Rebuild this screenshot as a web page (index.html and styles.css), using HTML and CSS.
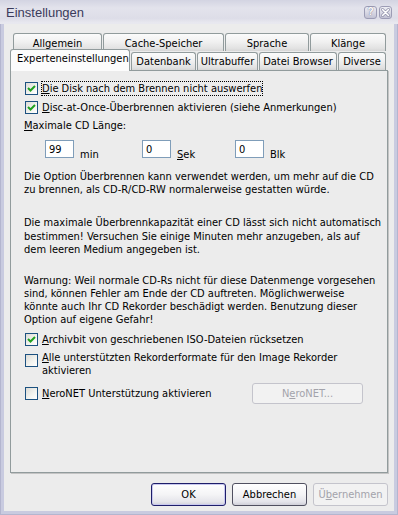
FILE: index.html
```html
<!DOCTYPE html>
<html lang="de">
<head>
<meta charset="utf-8">
<title>Einstellungen</title>
<link rel="stylesheet" href="styles.css">
</head>
<body>
<div class="window">
  <div class="titlebar">
    <span class="title">Einstellungen</span>
    <div class="tbuttons">
      <span class="tbtn"><span class="qmark">?</span></span>
      <span class="tbtn">
        <svg width="11" height="11" viewBox="0 0 11 11"><path d="M2.5 2.5 L8.5 8.5 M8.5 2.5 L2.5 8.5" stroke="#8c8ca6" stroke-width="3" stroke-linecap="round"/><path d="M2.5 2.5 L8.5 8.5 M8.5 2.5 L2.5 8.5" stroke="#ffffff" stroke-width="1.6" stroke-linecap="round"/></svg>
      </span>
    </div>
  </div>
  <div class="client">
    <div class="tabs">
      <div class="tabrow back">
        <div class="tab w-allg">Allgemein</div>
        <div class="tab w-cache">Cache-Speicher</div>
        <div class="tab w-spr">Sprache</div>
        <div class="tab w-kl">Klänge</div>
      </div>
      <div class="tabrow front">
        <div class="tab sel w-exp">Experteneinstellungen</div>
        <div class="tab w-db">Datenbank</div>
        <div class="tab w-ub">Ultrabuffer</div>
        <div class="tab w-dbr">Datei Browser</div>
        <div class="tab w-div">Diverse</div>
      </div>
    </div>
    <div class="panel">
      <div class="cbrow r1">
        <span class="cb"><svg width="11" height="11" viewBox="0 0 11 11"><path d="M2 5 L4.5 7.5 L9 3" fill="none" stroke="#21a121" stroke-width="2"/></svg></span>
        <span class="lbl focus"><u>D</u>ie Disk nach dem Brennen nicht auswerfen</span>
      </div>
      <div class="cbrow r2">
        <span class="cb"><svg width="11" height="11" viewBox="0 0 11 11"><path d="M2 5 L4.5 7.5 L9 3" fill="none" stroke="#21a121" stroke-width="2"/></svg></span>
        <span class="lbl"><u>D</u>isc-at-Once-Überbrennen aktivieren (siehe Anmerkungen)</span>
      </div>
      <div class="maxlabel"><u>M</u>aximale CD Länge:</div>
      <div class="inputs">
        <div class="grp g1"><span class="field">99</span><span class="unit">min</span></div>
        <div class="grp g2"><span class="field">0</span><span class="unit"><u>S</u>ek</span></div>
        <div class="grp g3"><span class="field">0</span><span class="unit">Blk</span></div>
      </div>
      <p class="txt p1">Die Option Überbrennen kann verwendet werden, um mehr auf die CD<br>zu brennen, als CD-R/CD-RW normalerweise gestatten würde.</p>
      <p class="txt p2">Die maximale Überbrennkapazität einer CD lässt sich nicht automatisch<br>bestimmen! Versuchen Sie einige Minuten mehr anzugeben, als auf<br>dem leeren Medium angegeben ist.</p>
      <p class="txt p3">Warnung: Weil normale CD-Rs nicht für diese Datenmenge vorgesehen<br>sind, können Fehler am Ende der CD auftreten. Möglichwerweise<br>könnte auch Ihr CD Rekorder beschädigt werden. Benutzung dieser<br>Option auf eigene Gefahr!</p>
      <div class="cbrow r3">
        <span class="cb"><svg width="11" height="11" viewBox="0 0 11 11"><path d="M2 5 L4.5 7.5 L9 3" fill="none" stroke="#21a121" stroke-width="2"/></svg></span>
        <span class="lbl"><u>A</u>rchivbit von geschriebenen ISO-Dateien rücksetzen</span>
      </div>
      <div class="cbrow r4">
        <span class="cb"></span>
        <span class="lbl"><u>A</u>lle unterstützten Rekorderformate für den Image Rekorder<br>aktivieren</span>
      </div>
      <div class="cbrow r5">
        <span class="cb"></span>
        <span class="lbl"><u>N</u>eroNET Unterstützung aktivieren</span>
        <span class="btn disabled nero">N<u>e</u>roNET...</span>
      </div>
    </div>
    <div class="buttons">
      <span class="btn default">OK</span>
      <span class="btn">Abbrechen</span>
      <span class="btn disabled">Ü<u>b</u>ernehmen</span>
    </div>
  </div>
</div>
</body>
</html>
```

FILE: styles.css
```css
* { box-sizing: border-box; }
html, body { margin: 0; padding: 0; }
body {
  width: 398px;
  height: 515px;
  overflow: hidden;
  font-family: "DejaVu Sans Condensed", "Liberation Sans", sans-serif;
  font-size: 11px;
  line-height: 13px;
  color: #000;
}
.window {
  width: 398px;
  height: 515px;
  display: flex;
  flex-direction: column;
  background: #c9cbe0;
  border: 1px solid #b4b6cf;
  border-top: none;
}
.titlebar {
  height: 24px;
  margin: 0 -1px;
  flex: none;
  display: flex;
  align-items: center;
  justify-content: space-between;
  padding: 0 6px 0 6px;
  background: linear-gradient(to bottom, #d3d4e2 0, #e3e3ec 35%, #dddde8 80%, #e9e9f0 100%);
  border-bottom: 1px solid #e8e8ef;
}
.title {
  font-family: "Liberation Sans", sans-serif;
  font-size: 13px;
  color: #3b3b5c;
  padding-top: 1px;
}
.tbuttons { display: flex; gap: 2px; padding-top: 1px; }
.tbtn {
  width: 13px;
  height: 13px;
  border: 1px solid #9c9cb5;
  border-radius: 3px;
  background: linear-gradient(to bottom, #eeeef4, #c2c2d4);
  display: flex;
  align-items: center;
  justify-content: center;
}
.qmark {
  font-family: "Liberation Sans", sans-serif;
  font-weight: bold;
  font-size: 10px;
  line-height: 10px;
  color: #fff;
  text-shadow: 0 0 1px #7d7d98, 0 0 1px #7d7d98;
}
.client {
  flex: 1;
  margin: 0 3px 3px 3px;
  background: #ececec;
  padding: 9px 6px 0 6px;
  display: flex;
  flex-direction: column;
}
.tabs { display: flex; flex-direction: column; }
.tabrow { display: flex; gap: 1px; }
.tabrow.back { height: 19px; padding-left: 3px; align-items: flex-start; }
.tabrow.front { height: 18px; align-items: flex-end; position: relative; z-index: 2; }
.tab {
  height: 18px;
  border: 1px solid #919b9c;
  border-bottom: none;
  border-radius: 3px 3px 0 0;
  background: linear-gradient(to bottom, #fbfbfb 0, #f1f1f1 45%, #e2e2e2 85%, #d6d6d6 100%);
  text-align: center;
  padding-top: 3px;
  white-space: nowrap;
  letter-spacing: 0;
}
.tabrow.front .tab { padding-top: 2px; }
.tab.sel {
  height: 22px;
  margin-bottom: -1px;
  background: #fcfcfc;
  padding-top: 4px;
  text-align: left;
  padding-left: 6px;
}
.w-allg { width: 89px; }
.w-cache { width: 121px; }
.w-spr { width: 84px; }
.w-kl { width: 76px; }
.w-exp { width: 120px; }
.w-db { width: 65px; }
.w-ub { width: 61px; }
.w-dbr { width: 78px; }
.w-div { width: 48px; }

.panel {
  height: 403px;
  flex: none;
  width: 378px;
  border: 1px solid #919b9c;
  box-shadow: 1px 1px 0 #c4c4c4;
  background: #ececec;
  padding: 0 0 0 13px;
  display: flex;
  flex-direction: column;
}
.cbrow { display: flex; align-items: center; }
.cb {
  width: 13px;
  height: 13px;
  flex: none;
  margin-left: 1px;
  border: 1px solid #1c5180;
  background: linear-gradient(135deg, #dcdcd7 0, #f4f4f0 60%, #ffffff 100%);
  display: flex;
  align-items: center;
  justify-content: center;
}
.lbl { margin-left: 3px; padding: 1px 1px; white-space: nowrap; }
.lbl.focus { outline: 1px dotted #000; outline-offset: -1px; }
.r1 { margin-top: 10px; height: 15px; }
.r2 { margin-top: 4px; height: 15px; }
.maxlabel { margin-top: 4px; }
.inputs { margin-top: 8px; display: flex; padding-left: 21px; height: 18px; }
.grp { display: flex; align-items: flex-start; }
.g1 { width: 97px; }
.g2 { width: 93px; }
.field {
  width: 29px;
  height: 18px;
  border: 1px solid #7f9db9;
  background: #fff;
  padding: 2px 0 0 3px;
}
.unit { margin-left: 6px; margin-top: 8px; }
.txt { margin: 0; }
.p1 { margin-top: 12px; }
.p2 { margin-top: 20px; line-height: 13.5px; }
.p3 { margin-top: 17px; line-height: 13.33px; }
.r3 { margin-top: 5px; height: 15px; }
.r4 { margin-top: 4px; align-items: flex-start; }
.r4 .cb { margin-top: 3px; }
.r4 .lbl { padding-top: 0; }
.r5 { margin-top: 5px; height: 21px; }

.btn {
  width: 75px;
  height: 23px;
  border: 1px solid #505060;
  border-radius: 3px;
  background: linear-gradient(to bottom, #ffffff 0, #f4f4f6 50%, #e4e4ea 85%, #cfcfd8 100%);
  display: flex;
  align-items: center;
  justify-content: center;
  white-space: nowrap;
}
.btn.default {
  border-color: #1e1e6a;
  box-shadow: inset 0 0 0 1px #c8c8ee;
}
.btn.disabled {
  border-color: #c4c4cc;
  background: #f2f2f2;
  color: #a3a3ab;
}
.btn.nero {
  width: 111px;
  height: 21px;
  margin-left: auto;
  margin-right: 24px;
}
.buttons {
  margin-top: 10px;
  display: flex;
  justify-content: flex-end;
  gap: 6px;
}
```
